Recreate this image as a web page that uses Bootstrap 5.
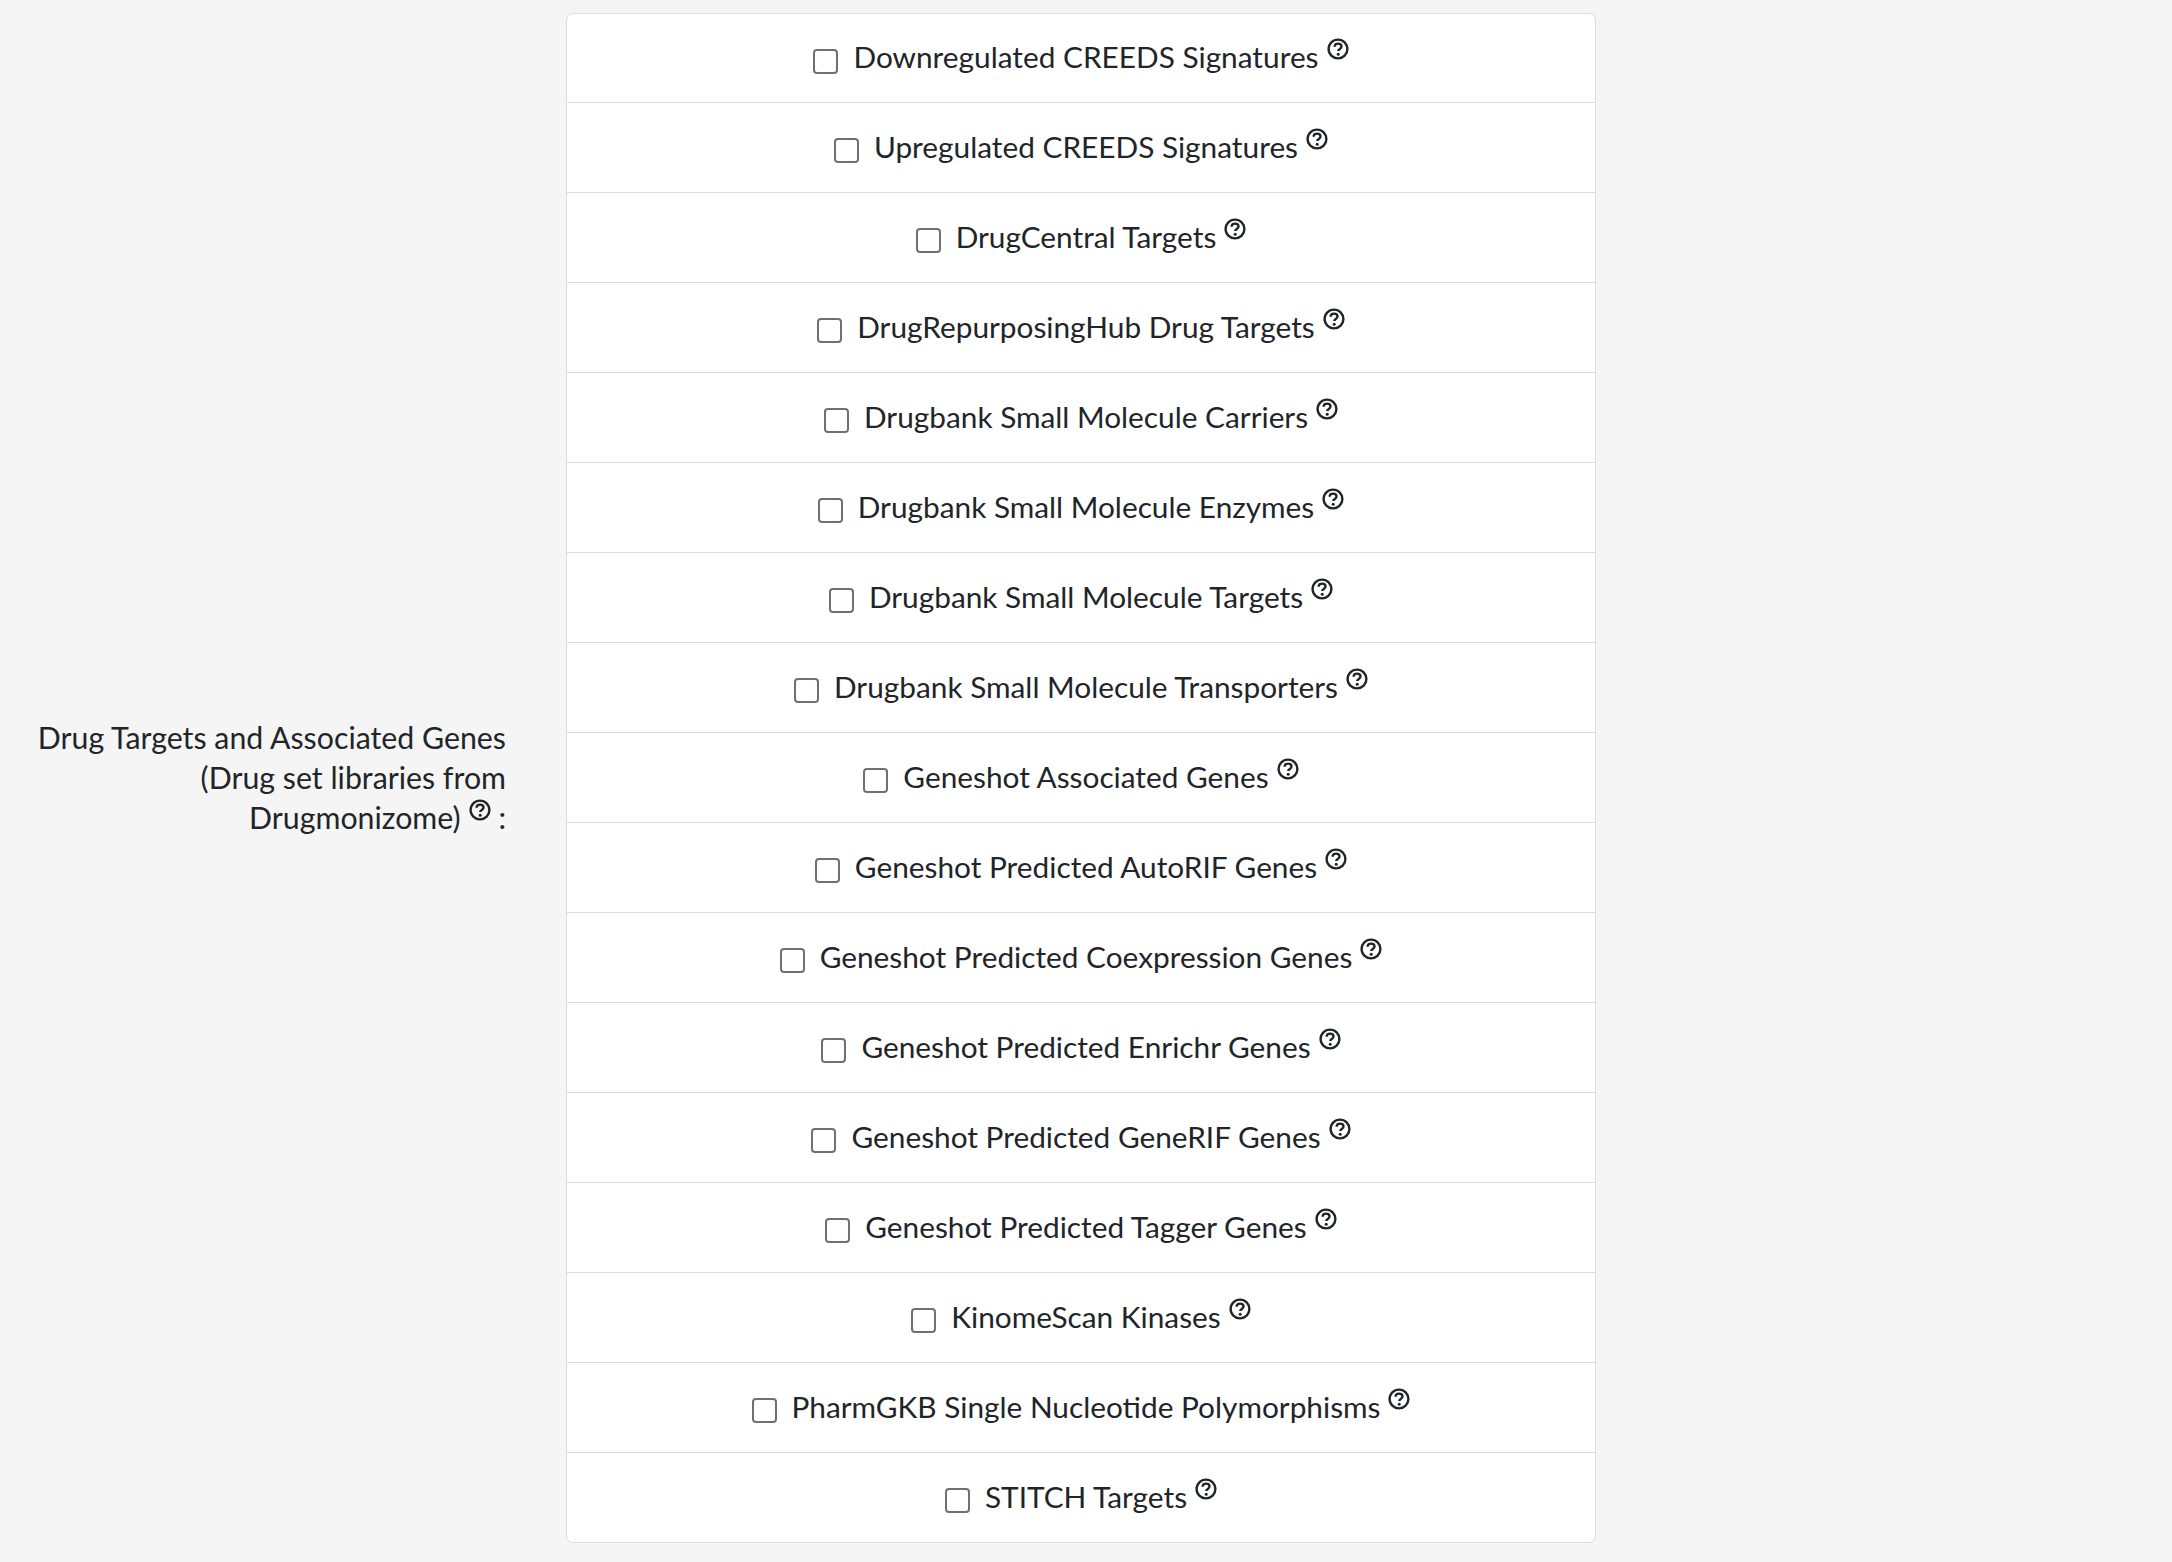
<!DOCTYPE html>
<html lang="en">
<head>
<meta charset="UTF-8">
<title>Drug Targets and Associated Genes</title>
<link href="https://cdn.jsdelivr.net/npm/bootstrap@5.3.0/dist/css/bootstrap.min.css" rel="stylesheet">
<style>
    body {
        background-color: #f5f5f5;
        color: #212529;
        font-family: "Lato", "Noto Sans", sans-serif;
        font-size: 29.8px;
        line-height: 40px;
    }

    .page-wrap {
        padding-top: 13px;
    }

    .side-label {
        width: 566px;
        padding: 0 60px 2px 20px;
        font-size: 30.3px;
    }

    .lib-list {
        width: 1030px;
        border-radius: 7px;
        --bs-list-group-border-color: #dcdcdc;
    }

    .lib-row {
        height: 90px;
        padding: 0;
        color: #212529;
    }

    .lib-name {
        margin-bottom: 2px;
    }

    .lib-row .lib-check[type=checkbox] {
        width: 25px;
        height: 25px;
        margin: 6px 15px 0 0;
        border: 2px solid #707070;
        border-radius: 4px;
        flex: none;
    }

    .help-icon {
        width: 22px;
        height: 22px;
        margin-top: -8px;
        margin-left: 8px;
        vertical-align: 8px;
    }
</style>
</head>
<body>
<svg width="0" height="0" class="position-absolute">
    <symbol id="help" viewBox="0 0 22 22">
        <circle cx="11" cy="11" r="9.4" fill="none" stroke="#212529" stroke-width="2.4"/>
        <path d="M7.6 8.8c0-2 1.5-3.2 3.5-3.2s3.4 1.2 3.4 2.9c0 2.5-3.3 2.4-3.3 4.6" fill="none" stroke="#212529" stroke-width="2.4"/>
        <circle cx="11.2" cy="16.3" r="1.5" fill="#212529"/>
    </symbol>
</svg>

<div class="page-wrap d-flex align-items-stretch">
    <div class="side-label text-end d-flex align-items-center justify-content-end">
        <div>Drug Targets and Associated Genes<br>(Drug set libraries from<br>Drugmonizome)<svg class="help-icon"><use href="#help"/></svg> :</div>
    </div>
    <div class="list-group lib-list" id="libs"></div>
</div>

<script>
    const libs = [
        "Downregulated CREEDS Signatures",
        "Upregulated CREEDS Signatures",
        "DrugCentral Targets",
        "DrugRepurposingHub Drug Targets",
        "Drugbank Small Molecule Carriers",
        "Drugbank Small Molecule Enzymes",
        "Drugbank Small Molecule Targets",
        "Drugbank Small Molecule Transporters",
        "Geneshot Associated Genes",
        "Geneshot Predicted AutoRIF Genes",
        "Geneshot Predicted Coexpression Genes",
        "Geneshot Predicted Enrichr Genes",
        "Geneshot Predicted GeneRIF Genes",
        "Geneshot Predicted Tagger Genes",
        "KinomeScan Kinases",
        "PharmGKB Single Nucleotide Polymorphisms",
        "STITCH Targets"
    ];
    const contenedor = document.getElementById("libs");
    libs.forEach(nombre => {
        const fila = document.createElement("label");
        fila.className = "list-group-item lib-row d-flex align-items-center justify-content-center";
        fila.innerHTML = `<input type="checkbox" class="form-check-input lib-check"><span class="lib-name">${nombre}<svg class="help-icon"><use href="#help"/></svg></span>`;
        contenedor.appendChild(fila);
    });
</script>
<script src="https://cdn.jsdelivr.net/npm/bootstrap@5.3.0/dist/js/bootstrap.bundle.min.js"></script>
</body>
</html>
